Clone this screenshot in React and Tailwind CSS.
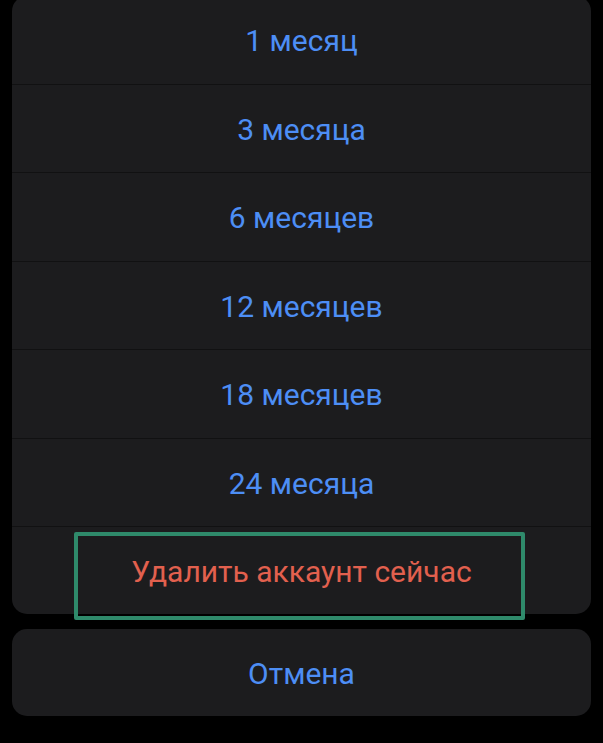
export default function App() {
  const options = ['1 месяц', '3 месяца', '6 месяцев', '12 месяцев', '18 месяцев', '24 месяца']

  return (
    <div className="h-[743px] w-[603px] overflow-hidden bg-black" style={{ fontFamily: 'Roboto, "Noto Sans", sans-serif' }}>
      <div className="flex flex-col px-3 pt-0">
        {/* action sheet */}
        <div className="-mt-[4px] rounded-[15px] bg-[#1c1c1e]">
          {options.map((label) => (
            <button
              key={label}
              type="button"
              className="flex h-[88.5px] w-full items-center justify-center border-b border-[#111112] pt-[2px] text-[30px] text-[#4d8ef5]"
            >
              {label}
            </button>
          ))}
          <div className="relative flex h-[87px] items-center justify-center">
            <span className="pt-[2px] text-[30px] text-[#e2604e]">Удалить аккаунт сейчас</span>
            {/* highlight frame */}
            <div className="absolute left-[62px] top-[5px] h-[88px] w-[451px] rounded-[2px] border-[4px] border-[#2f8a6b]" />
          </div>
        </div>

        {/* cancel */}
        <button
          type="button"
          className="mt-[15px] flex h-[87px] w-full items-center justify-center rounded-[15px] bg-[#1c1c1e] pt-[2px] text-[30px] text-[#4d8ef5]"
        >
          Отмена
        </button>
      </div>
    </div>
  )
}
